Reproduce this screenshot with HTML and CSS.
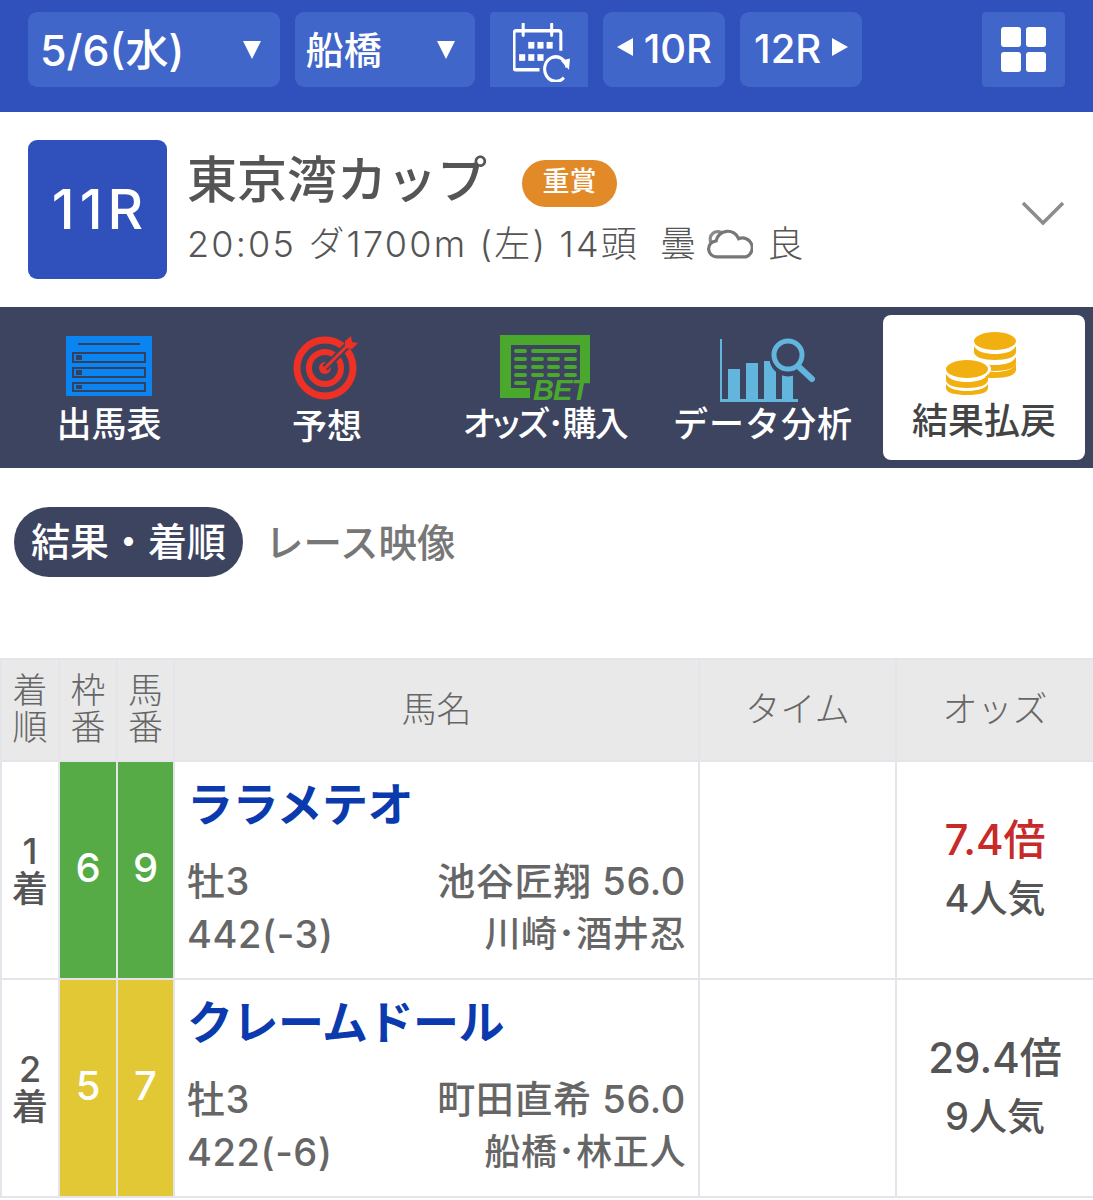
FILE: index.html
```html
<!DOCTYPE html>
<html lang="ja">
<head>
  <meta charset="UTF-8" />
  <meta name="viewport" content="width=device-width, initial-scale=1.0" />
  <title>東京湾カップ 結果・着順</title>
  <link rel="stylesheet" href="styles.css">
</head>
<body>
  <header class="topbar">
    <div class="btn btn-date"><span>5/6(水)</span><i class="tri-down"></i></div>
    <div class="btn btn-place"><span>船橋</span><i class="tri-down"></i></div>
    <div class="btn btn-cal">
      <svg width="58" height="59" viewBox="1 1 57 53" preserveAspectRatio="none">
        <g fill="none" stroke="#fff" stroke-width="3">
          <path d="M27 43H4a2 2 0 0 1-2-2V10a2 2 0 0 1 2-2h42a2 2 0 0 1 2 2v16" />
          <path d="M11 2v10M39 2v10" stroke-linecap="round" />
          <path d="M54 41a11 11 0 1 0-3 9" />
        </g>
        <path d="M48 35l9-2-1 10z" fill="#fff" />
        <g fill="#fff">
          <rect x="16" y="18" width="6" height="6" /><rect x="25" y="18" width="6" height="6" /><rect x="34" y="18" width="6" height="6" />
          <rect x="7" y="29" width="6" height="6" /><rect x="16" y="29" width="6" height="6" /><rect x="25" y="29" width="6" height="6" />
        </g>
      </svg>
    </div>
    <div class="btn btn-race"><i class="tri-left"></i><span>10R</span></div>
    <div class="btn btn-race"><span>12R</span><i class="tri-right"></i></div>
    <div class="btn btn-menu">
      <div class="menu-grid"><b></b><b></b><b></b><b></b></div>
    </div>
  </header>

  <section class="race">
    <div class="race-no"><span>11R</span></div>
    <div class="race-info">
      <div class="race-title"><h1>東京湾カップ</h1><span class="grade">重賞</span></div>
      <div class="race-meta">
        <span>20:05 ダ1700m (左) 14頭</span>
        <span class="weather">曇</span>
        <svg class="cloud" width="48" height="30" viewBox="4 1 38 28">
          <path d="M7 15a7 7 0 0 1 11-9" fill="none" stroke="#8a8a8a" stroke-width="3" />
          <path d="M12 27a7.500 7.500 0 0 1-1-15 11 11 0 0 1 21-2 8.500 8.500 0 0 1 7 17z" fill="#fff" stroke="#777" stroke-width="3" />
        </svg>
        <span>良</span>
      </div>
    </div>
    <svg class="chevron" width="44" height="26" viewBox="0 0 44 26">
      <path d="M2 3l20 20L42 3" fill="none" stroke="#8c8c8c" stroke-width="3.500" />
    </svg>
  </section>

  <nav class="tabs">
    <a class="tab">
      <svg width="86" height="60" viewBox="0 0 86 60">
        <rect width="86" height="60" fill="#0a84f0" />
        <g fill="none" stroke="#33415f" stroke-width="2">
          <path d="M12 8h62" />
          <rect x="7" y="17" width="72" height="9" /><rect x="7" y="32" width="72" height="9" /><rect x="7" y="47" width="72" height="8" />
        </g>
        <g fill="#33415f"><rect x="10" y="19" width="6" height="5" /><rect x="10" y="34" width="6" height="5" /><rect x="10" y="49" width="6" height="4" /></g>
      </svg>
      <span>出馬表</span>
    </a>
    <a class="tab tab-yoso">
      <svg width="70" height="66" viewBox="0 0 70 66">
        <circle cx="33" cy="34" r="28" fill="none" stroke="#ee3124" stroke-width="7" />
        <circle cx="33" cy="34" r="16" fill="none" stroke="#ee3124" stroke-width="6" />
        <circle cx="33" cy="34" r="6" fill="#ee3124" />
        <path d="M33 34L58 9" stroke="#3d4460" stroke-width="7" />
        <path d="M33 34L58 9" stroke="#ee3124" stroke-width="3" />
        <path d="M53 7l6-5 1 6 6 1-6 6-7-1z" fill="#ee3124" />
      </svg>
      <span>予想</span>
    </a>
    <a class="tab tab-bet">
      <svg width="90" height="72" viewBox="0 0 90 72">
        <path d="M0 0h90v48H32v15H0z" fill="#4aa82c" />
        <rect x="11" y="10" width="69" height="38" fill="#3d4460" />
        <rect x="11" y="40" width="21" height="13" fill="#3d4460" />
        <g fill="#4aa82c">
          <rect x="14" y="14" width="13" height="4" rx="2" /><rect x="31" y="14" width="46" height="4" rx="2" />
          <rect x="14" y="22" width="13" height="4" rx="2" /><rect x="31" y="22" width="13" height="4" rx="2" /><rect x="47" y="22" width="13" height="4" rx="2" /><rect x="64" y="22" width="13" height="4" rx="2" />
          <rect x="14" y="30" width="13" height="4" rx="2" /><rect x="31" y="30" width="13" height="4" rx="2" /><rect x="47" y="30" width="13" height="4" rx="2" /><rect x="64" y="30" width="13" height="4" rx="2" />
          <rect x="14" y="38" width="13" height="4" rx="2" /><rect x="31" y="38" width="13" height="4" rx="2" /><rect x="47" y="38" width="13" height="4" rx="2" /><rect x="64" y="38" width="13" height="4" rx="2" />
          <rect x="14" y="46" width="13" height="4" rx="2" />
        </g>
        <rect x="30" y="47" width="60" height="19" fill="#3d4460" />
        <text class="bet" x="33" y="65">BET</text>
      </svg>
      <span>オッズ･購入</span>
    </a>
    <a class="tab tab-data">
      <svg width="96" height="66" viewBox="0 0 96 66">
        <g fill="#62b6de">
          <rect x="1" y="2" width="2" height="62" />
          <rect x="1" y="62" width="78" height="3" />
          <rect x="9" y="32" width="12" height="30" />
          <rect x="27" y="26" width="12" height="36" />
          <rect x="45" y="24" width="12" height="38" />
          <rect x="63" y="38" width="11" height="24" />
        </g>
        <circle cx="69" cy="21" r="15" fill="#3d4460" stroke="#3d4460" stroke-width="7" />
        <circle cx="69" cy="18" r="14" fill="#3d4460" stroke="#62b6de" stroke-width="5" />
        <path d="M79 29l14 13" stroke="#62b6de" stroke-width="6" stroke-linecap="round" />
      </svg>
      <span>データ分析</span>
    </a>
    <a class="tab tab-on">
      <svg width="72" height="64" viewBox="0 0 72 64">
        <g fill="#f2b010">
          <ellipse cx="50" cy="9" rx="21" ry="9" />
          <path d="M29 14c3 6 12 8 21 8s18-2 21-8v6c0 5-9 8-21 8s-21-3-21-8z" />
          <path d="M29 25c3 6 12 8 21 8s18-2 21-8v6c0 5-9 8-21 8s-21-3-21-8z" />
          <path d="M40 38c3 1 6 2 10 2 9 0 18-2 21-8v6c0 5-9 8-21 8-3 0-7 0-10-1z" />
        </g>
        <ellipse cx="22" cy="37" rx="24" ry="12" fill="#fff" />
        <g fill="#f2b010">
          <ellipse cx="22" cy="37" rx="21" ry="9" />
          <path d="M1 42c3 6 12 8 21 8s18-2 21-8v6c0 5-9 8-21 8S1 53 1 48z" />
          <path d="M1 52c3 5 12 7 21 7s18-2 21-7v4c0 5-9 7-21 7S1 61 1 56z" />
        </g>
      </svg>
      <span>結果払戻</span>
    </a>
  </nav>

  <div class="subtabs">
    <span class="pill">結果・着順</span>
    <span class="subtab">レース映像</span>
  </div>

  <table class="result">
    <colgroup>
      <col class="c-rank"><col class="c-waku"><col class="c-uma"><col class="c-name"><col class="c-time"><col class="c-odds">
    </colgroup>
    <thead>
      <tr>
        <th class="th-small">着<br>順</th>
        <th class="th-small">枠<br>番</th>
        <th class="th-small">馬<br>番</th>
        <th>馬名</th>
        <th>タイム</th>
        <th>オッズ</th>
      </tr>
    </thead>
    <tbody>
      <tr>
        <td class="rank">1<br>着</td>
        <td class="num green">6</td>
        <td class="num green">9</td>
        <td class="horse">
          <div class="horse-name">ララメテオ</div>
          <div class="horse-row"><span>牡3</span><span>池谷匠翔 56.0</span></div>
          <div class="horse-row"><span>442(-3)</span><span class="stable">川崎･酒井忍</span></div>
        </td>
        <td></td>
        <td class="odds"><div class="odds-val hot">7.4倍</div><div class="pop">4人気</div></td>
      </tr>
      <tr>
        <td class="rank">2<br>着</td>
        <td class="num yellow">5</td>
        <td class="num yellow">7</td>
        <td class="horse">
          <div class="horse-name">クレームドール</div>
          <div class="horse-row"><span>牡3</span><span>町田直希 56.0</span></div>
          <div class="horse-row"><span>422(-6)</span><span class="stable">船橋･林正人</span></div>
        </td>
        <td></td>
        <td class="odds"><div class="odds-val">29.4倍</div><div class="pop">9人気</div></td>
      </tr>
    </tbody>
  </table>
</body>
</html>
```
FILE: styles.css
```css
* {
  box-sizing: border-box;
}
body {
  margin: 0;
  overflow-x: hidden;
  font-family: Inter, "Noto Sans CJK JP", sans-serif;
  color: #555;
  background: #fff;
}

/* top bar */
.topbar {
  display: flex;
  gap: 15px;
  height: 112px;
  padding: 12px 28px 0;
  background: #3050bc;
}
.btn {
  display: flex;
  align-items: center;
  height: 75px;
  background: #4066c9;
  border-radius: 9px;
  color: #fff;
}
.btn span {
  padding-bottom: 5px;
}
.btn-date {
  width: 252px;
  padding: 0 19px 0 12px;
  justify-content: space-between;
  font-size: 43px;
  font-weight: 500;
}
.btn-place {
  width: 180px;
  padding: 0 20px 0 11px;
  justify-content: space-between;
  font-size: 38px;
  font-weight: 500;
}
.btn-cal {
  width: 99px;
  padding: 6px 0 0 7px;
  justify-content: center;
  border-radius: 4px 4px 0 0;
}
.btn-race {
  width: 122px;
  justify-content: center;
  gap: 11px;
  font-size: 40px;
  font-weight: 500;
}
.btn-race span {
  padding-bottom: 2px;
}
.btn-menu {
  width: 83px;
  margin-left: 105px;
  justify-content: center;
  border-radius: 4px;
}
.tri-down {
  border-left: 9px solid transparent;
  border-right: 9px solid transparent;
  border-top: 18px solid #fff;
}
.tri-left, .tri-right {
  margin-bottom: 6px;
  border-top: 9px solid transparent;
  border-bottom: 9px solid transparent;
}
.tri-left {
  border-right: 16px solid #fff;
}
.tri-right {
  border-left: 16px solid #fff;
}
.menu-grid {
  display: grid;
  grid-template-columns: 20px 20px;
  grid-auto-rows: 20px;
  gap: 5px;
}
.menu-grid b {
  background: #fff;
  border-radius: 3px;
}

/* race heading */
.race {
  display: flex;
  align-items: center;
  height: 195px;
  padding: 0 28px;
}
.race-no {
  display: flex;
  align-items: center;
  justify-content: center;
  width: 139px;
  height: 139px;
  margin-right: 20px;
  padding: 0 0 2px 5px;
  background: #3050bc;
  border-radius: 9px;
  color: #fff;
  font-size: 55px;
  font-weight: 500;
  letter-spacing: 5px;
}
.race-info {
  flex: 1;
}
.race-title {
  display: flex;
  align-items: center;
  height: 64px;
}
.race-title h1 {
  margin: 0 35px 2px 0;
  font-size: 50px;
  font-weight: 500;
  line-height: 64px;
}
.grade {
  width: 95px;
  height: 47px;
  margin-top: 4px;
  background: #e28a28;
  border-radius: 24px;
  color: #fff;
  font-size: 27px;
  font-weight: 500;
  line-height: 44px;
  text-align: center;
}
.race-meta {
  display: flex;
  align-items: center;
  margin-top: 5px;
  font-size: 36px;
  font-weight: 300;
  letter-spacing: 2.2px;
  line-height: 52px;
}
.weather {
  margin-left: 21px;
}
.cloud {
  margin: 0 14px 0 7px;
}
.chevron {
  margin-top: 6px;
}

/* main tabs */
.tabs {
  display: flex;
  height: 161px;
  padding: 8px 8px 8px 0;
  background: #3d4460;
}
.tab {
  display: flex;
  flex-direction: column;
  align-items: center;
  justify-content: flex-end;
  width: 218px;
  height: 145px;
  padding-bottom: 11px;
  color: #fff;
  font-size: 35px;
  font-weight: 500;
  line-height: 50px;
  white-space: nowrap;
}
.tab svg {
  margin-bottom: 3px;
}
.tab-yoso {
  padding-bottom: 9px;
}
.tab-yoso svg {
  margin-bottom: 1px;
}
.tab-bet span {
  font-size: 34px;
  font-feature-settings: "palt";
  letter-spacing: -1.8px;
}
.tab-bet svg {
  margin-bottom: -8px;
}
.tab-data span {
  letter-spacing: 1px;
}
.tab-data svg {
  margin: 0 0 -4px 8px;
}
.tab-on {
  width: 202px;
  margin-left: 11px;
  padding-bottom: 14px;
  background: #fff;
  border-radius: 8px;
  color: #444;
  font-size: 36px;
}
.tab-on svg {
  margin: 0 0 0 -6px;
}
.bet {
  font-family: "Liberation Sans", sans-serif;
  font-size: 29px;
  font-weight: 700;
  font-style: italic;
  fill: #4aa82c;
  letter-spacing: -1px;
}

/* sub tabs */
.subtabs {
  display: flex;
  align-items: flex-start;
  gap: 22px;
  height: 190px;
  padding: 39px 14px 0;
}
.pill {
  width: 229px;
  height: 70px;
  background: #3d4460;
  border-radius: 35px;
  color: #fff;
  font-size: 39px;
  font-weight: 500;
  line-height: 70px;
  text-align: center;
}
.subtab {
  color: #777;
  font-size: 38.5px;
  font-weight: 500;
  line-height: 72px;
}

/* result table */
.result {
  width: 1095px;
  border-collapse: separate;
  border-spacing: 2px;
  background: #e4e4ea;
  table-layout: fixed;
}
.c-rank { width: 56px; }
.c-waku { width: 56px; }
.c-uma { width: 55px; }
.c-name { width: 523px; }
.c-time { width: 195px; }
.result th {
  height: 100px;
  padding: 0 0 2px;
  background: #e9e9e9;
  color: #666;
  font-size: 35px;
  font-weight: 300;
  line-height: 37px;
  text-align: center;
}
.result td {
  height: 216px;
  padding: 0;
  background: #fff;
  text-align: center;
}
.result td.rank {
  color: #555;
  font-size: 36px;
  font-weight: 500;
  line-height: 38px;
}
.result td.num {
  padding-bottom: 6px;
  color: #fff;
  font-size: 40px;
  font-weight: 500;
}
.result td.green {
  background: #56ab47;
}
.result td.yellow {
  background: #e3c836;
}
.result td.horse {
  padding: 6px 12px 0;
  text-align: left;
  vertical-align: top;
}
.horse-name {
  margin-bottom: 15px;
  color: #0a3aad;
  font-size: 46px;
  font-weight: 700;
  letter-spacing: -0.5px;
  line-height: 72px;
}
.horse-row {
  display: flex;
  justify-content: space-between;
  color: #666;
  font-size: 38px;
  font-weight: 500;
  letter-spacing: 0.6px;
  line-height: 53px;
}
.horse-row .stable {
  font-size: 36px;
}
.odds-val {
  font-size: 42px;
  font-weight: 500;
  line-height: 56px;
}
.odds-val.hot {
  color: #c82a2a;
}
.pop {
  font-size: 38px;
  font-weight: 500;
  line-height: 60px;
}
```
